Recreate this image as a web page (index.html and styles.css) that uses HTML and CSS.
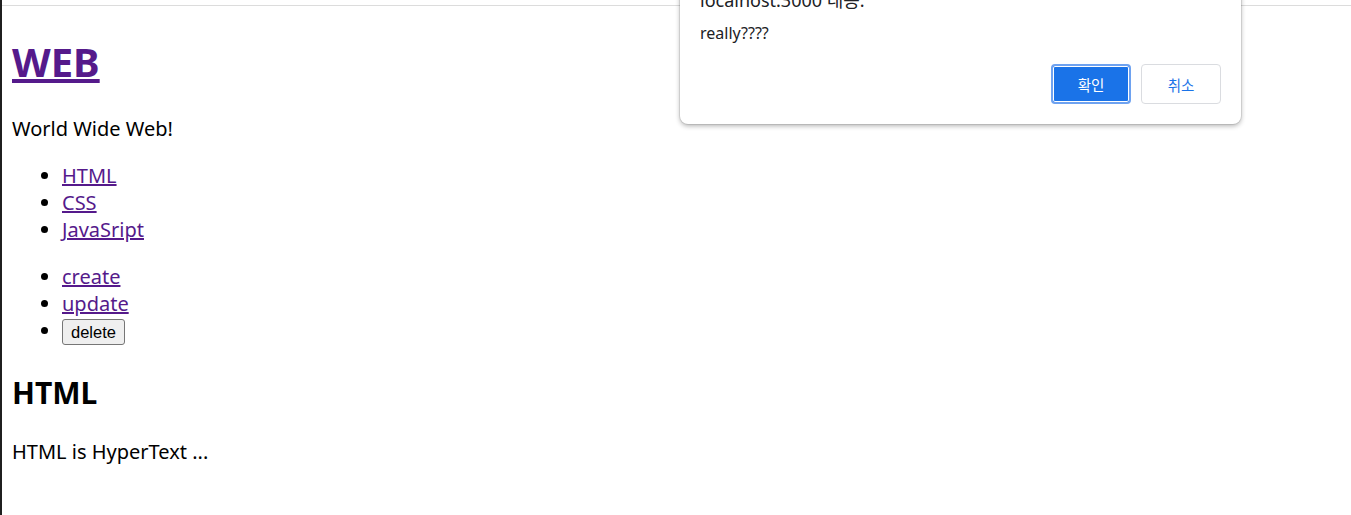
FILE: index.html
```html
<!DOCTYPE html>
<html>
	<head>
		<title>WEB</title>
		<meta charset="utf-8" />
		<link rel="stylesheet" href="styles.css">
	</head>
	<body>
		<div id="frame">
			<div id="topbar"></div>
			<div id="page">
				<h1><a href="/">WEB</a></h1>
				<p>World Wide Web!</p>
				<ul>
					<li><a href="/?id=HTML">HTML</a></li>
					<li><a href="/?id=CSS">CSS</a></li>
					<li><a href="/?id=JavaSript">JavaSript</a></li>
				</ul>
				<ul>
					<li><a href="/create">create</a></li>
					<li><a href="/update?id=HTML">update</a></li>
					<li><button class="del" type="button">delete</button></li>
				</ul>
				<h2>HTML</h2>
				<p>HTML is HyperText ...</p>
			</div>
		</div>

		<div id="dialog">
			<div class="dlg-title">localhost:3000 내용:</div>
			<div class="dlg-msg">really????</div>
			<div class="dlg-buttons">
				<div class="dlg-btn ok">확인</div>
				<div class="dlg-btn cancel">취소</div>
			</div>
		</div>
	</body>
</html>
```

FILE: styles.css
```css
*{ box-sizing: border-box; }
body{ margin: 0; background: white; font-family: "Noto Sans", "Noto Sans CJK KR", sans-serif; }
#frame{
	border-left: 2px solid #1f1f1f;
	min-height: 515px;
}
#topbar{ height: 6px; border-bottom: 1px solid #dcdcdc; }
#page{
	padding: 0 10px;
	font-size: 20px; line-height: 27px; color: black;
}
#page a{ color: #551a8b; }
h1{ font-size: 40px; line-height: 53px; margin: 29px 0 27px; }
h2{ font-size: 30px; line-height: 40px; margin: 28px 0 25px; }
p{ margin: 20px 0; }
ul{ margin: 20px 0; padding-left: 50px; }
.del{
	font-family: "Liberation Sans", sans-serif; font-size: 16.5px;
	padding: 1px 8px; height: 26px; line-height: 20px;
	background: #efefef; color: black;
	border: 1px solid #767676; border-radius: 3px;
}

#dialog{
	position: absolute; left: 680px; top: -30px;
	width: 561px; padding: 20px;
	background: white; border-radius: 8px;
	box-shadow: 0 0 0 1px rgba(0,0,0,0.08), 0 2px 5px rgba(0,0,0,0.3);
	font-family: "Noto Sans", "Noto Sans CJK KR", sans-serif; color: #202124;
}
.dlg-title{ font-size: 18px; line-height: 20px; height: 20px; }
.dlg-msg{ font-size: 16px; line-height: 20px; margin-top: 13px; }
.dlg-buttons{ display: flex; justify-content: flex-end; gap: 10px; margin-top: 21px; }
.dlg-btn{
	width: 80px; height: 40px; border-radius: 4px;
	font-family: "Noto Sans CJK KR", sans-serif; font-size: 14.5px;
	display: flex; align-items: center; justify-content: center;
}
.ok{
	background: #1a73e8; color: white;
	border: 2px solid #6ea2f0; box-shadow: inset 0 0 0 1px white;
}
.cancel{ background: white; color: #1a73e8; border: 1px solid #dadce0; }
```
